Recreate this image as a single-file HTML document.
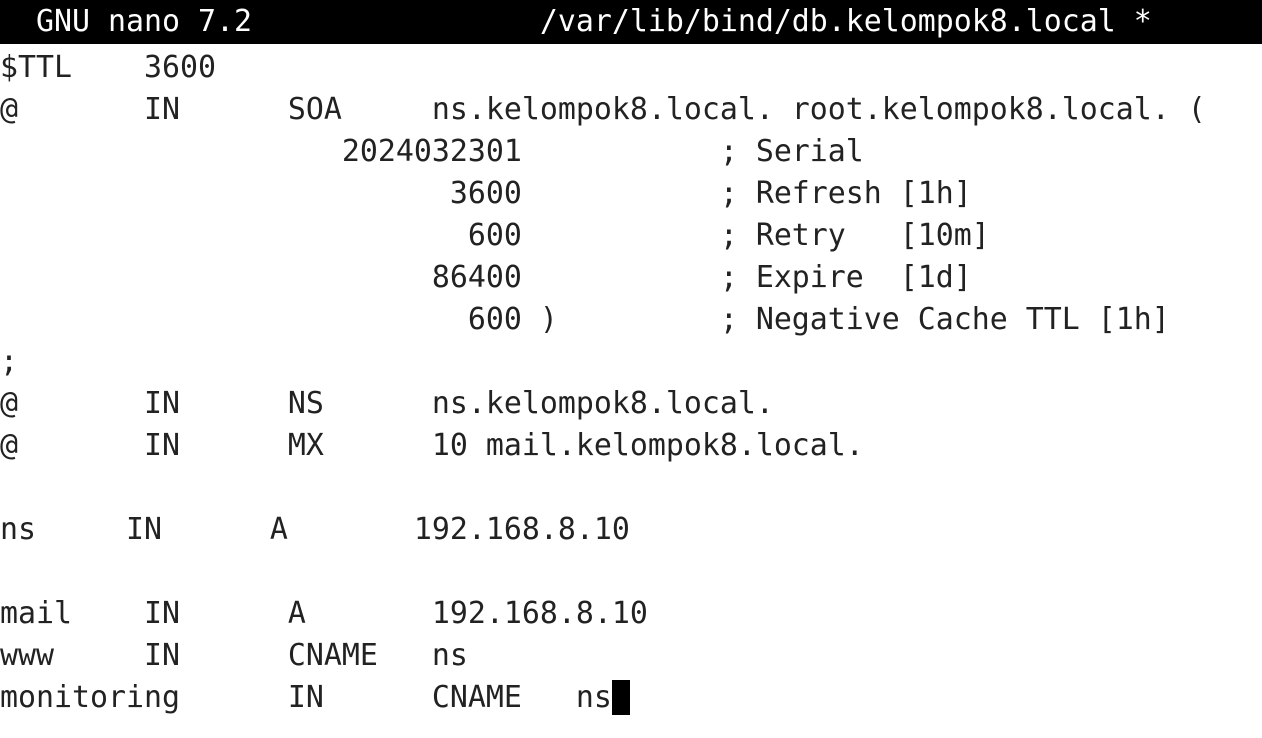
<!DOCTYPE html>
<html><head><meta charset="utf-8"><style>
html,body{margin:0;padding:0;background:#fff;width:1262px;height:738px;overflow:hidden}
pre{margin:0;font-family:"DejaVu Sans Mono","Liberation Mono",monospace;font-size:29.9px;line-height:42px;color:#222;white-space:pre;overflow:hidden;width:1262px}
.hdr{background:#000;color:#fff;height:44px;line-height:44px}
.cur{background:#000;color:#fff}
</style></head><body>
<pre class="hdr">  GNU nano 7.2                /var/lib/bind/db.kelompok8.local *</pre>
<pre style="margin-top:3px">$TTL    3600
@       IN      SOA     ns.kelompok8.local. root.kelompok8.local. (
                   2024032301           ; Serial
                         3600           ; Refresh [1h]
                          600           ; Retry   [10m]
                        86400           ; Expire  [1d]
                          600 )         ; Negative Cache TTL [1h]
;
@       IN      NS      ns.kelompok8.local.
@       IN      MX      10 mail.kelompok8.local.

ns     IN      A       192.168.8.10

mail    IN      A       192.168.8.10
www     IN      CNAME   ns
monitoring      IN      CNAME   ns<span class="cur"> </span></pre>
</body></html>
